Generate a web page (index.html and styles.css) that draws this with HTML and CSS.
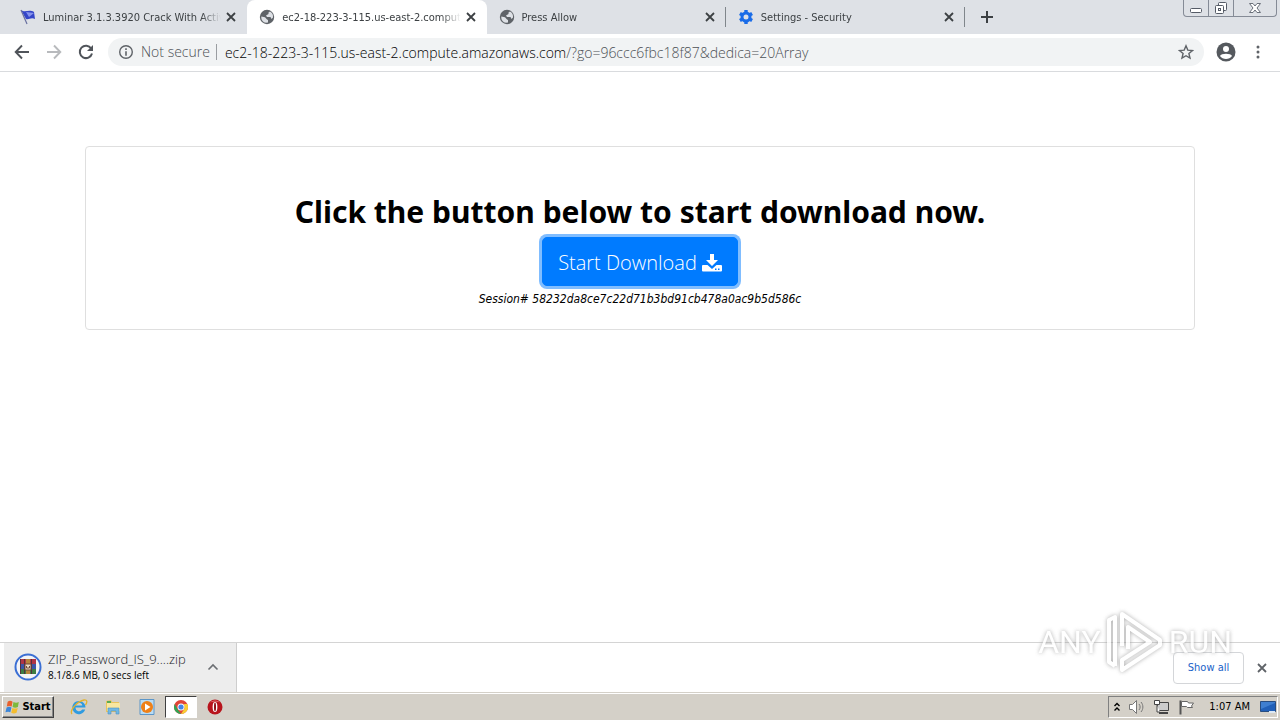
FILE: index.html
```
<!DOCTYPE html>
<html lang="en">
<head>
<meta charset="utf-8">
<title>Start Download</title>
<link rel="stylesheet" href="styles.css">
</head>
<body>
<svg class="defs" aria-hidden="true">
  <symbol id="close" viewBox="0 0 10 10"><path d="M1 1L9 9M9 1L1 9" fill="none" stroke="currentColor" stroke-width="1.8"/></symbol>
  <symbol id="globe" viewBox="0 0 16 16"><circle cx="8" cy="8" r="7.200" fill="#5f6368"/><path d="M7 6.500L9.500 5V3.500L11 2.600C13.500 4 14.200 6 14 8.500L12.500 10 11.500 8H8z" fill="#dee1e6"/><path d="M2.300 7.500L6 8.300 8 10.500 9 11v2.500L7 13.800C4 13.500 2 11 2.300 7.500z" fill="#dee1e6"/></symbol>
</svg>

<header class="tabstrip">
  <div class="tabs" role="tablist">
    <div class="tab" role="tab">
      <svg class="favicon" viewBox="0 0 16 16"><path d="M1 1c4 3 8-1 13 2l1 7c-4-2-6 1-9 0z" fill="#3546c8"/><path d="M6 3l8 1-5 4z" fill="#8793ec"/><path d="M1 1l6 14" stroke="#6870a0" stroke-width="1.200"/></svg>
      <span class="tab-title">Luminar 3.1.3.3920 Crack With Activ</span>
      <button class="tab-close" aria-label="Close tab"><svg><use href="#close"/></svg></button>
    </div>
    <div class="tab active" role="tab" aria-selected="true">
      <svg class="favicon"><use href="#globe"/></svg>
      <span class="tab-title">ec2-18-223-3-115.us-east-2.comput</span>
      <button class="tab-close" aria-label="Close tab"><svg><use href="#close"/></svg></button>
    </div>
    <div class="tab divided" role="tab">
      <svg class="favicon"><use href="#globe"/></svg>
      <span class="tab-title">Press Allow</span>
      <button class="tab-close" aria-label="Close tab"><svg><use href="#close"/></svg></button>
    </div>
    <div class="tab divided" role="tab">
      <svg class="favicon" viewBox="0 0 16 16"><circle cx="8" cy="8" r="4" fill="none" stroke="#1a6ce8" stroke-width="3"/><path d="M8 1v2.500M8 12.500V15M1.900 4.500l2.200 1.300M11.900 10.200l2.200 1.300M1.900 11.500l2.200-1.300M11.900 5.800l2.200-1.300" stroke="#1a6ce8" stroke-width="3.400"/></svg>
      <span class="tab-title">Settings - Security</span>
      <button class="tab-close" aria-label="Close tab"><svg><use href="#close"/></svg></button>
    </div>
  </div>
  <button class="new-tab" aria-label="New tab"><svg viewBox="0 0 12 12"><path d="M6 0v12M0 6h12" stroke="#3c4043" stroke-width="2"/></svg></button>
  <div class="window-controls">
    <button aria-label="Minimize"><svg viewBox="0 0 14 14"><rect x="1.500" y="7.500" width="11" height="4" rx="1" fill="#fff" stroke="#555b66"/></svg></button>
    <button aria-label="Restore"><svg viewBox="0 0 14 14"><rect x="4.500" y="1.500" width="8" height="8" rx="1" fill="#fff" stroke="#555b66"/><rect x="1.500" y="4.500" width="8" height="8" rx="1" fill="#fff" stroke="#555b66"/><rect x="4.500" y="7.500" width="2" height="2" fill="none" stroke="#555b66"/></svg></button>
    <button class="wide" aria-label="Close"><svg viewBox="0 0 14 14"><path d="M1.500 2.500h3.500l2 2.500 2-2.500h3.500L9 7l3.500 4.500H9L7 9l-2 2.500H1.500L5 7z" fill="#fff" stroke="#6a707a"/></svg></button>
  </div>
</header>

<nav class="toolbar">
  <button class="tool" aria-label="Back"><svg viewBox="0 0 16 16"><path d="M15 8H2M8 1.500L1.700 8 8 14.500" fill="none" stroke="#50545a" stroke-width="1.900"/></svg></button>
  <button class="tool" aria-label="Forward"><svg viewBox="0 0 16 16"><path d="M1 8h13M8 1.500L14.300 8 8 14.500" fill="none" stroke="#b8babd" stroke-width="1.900"/></svg></button>
  <button class="tool" aria-label="Reload"><svg viewBox="0 0 16 16"><path d="M13.200 4.500A6.200 6.200 0 1 0 14 9.500" fill="none" stroke="#50545a" stroke-width="2"/><path d="M15 1v6H9z" fill="#50545a"/></svg></button>
  <div class="omnibox">
    <svg class="info" viewBox="0 0 16 16"><circle cx="8" cy="8" r="6.300" fill="none" stroke="#5f6368" stroke-width="1.400"/><path d="M8 4.200v1.700M8 7.200v4.600" stroke="#5f6368" stroke-width="1.600"/></svg>
    <span class="security">Not secure</span>
    <span class="url"><span class="host">ec2-18-223-3-115.us-east-2.compute.amazonaws.com</span>/?go=96ccc6fbc18f87&amp;dedica=20Array</span>
    <button class="star" aria-label="Bookmark this page"><svg viewBox="0 0 16 16"><path d="M8 1.800l1.800 4.300 4.700.4-3.600 3 1.100 4.600L8 11.700l-4 2.400 1.100-4.600-3.600-3 4.700-.4z" fill="none" stroke="#5f6368" stroke-width="1.400"/></svg></button>
  </div>
  <button class="tool" aria-label="Profile"><svg class="avatar" viewBox="0 0 20 20"><circle cx="10" cy="10" r="9.500" fill="#55595e"/><circle cx="10" cy="7" r="3" fill="#fff"/><path d="M4 14c1-3 11-3 12 0-2.500 4-9.500 4-12 0z" fill="#fff"/></svg></button>
  <button class="tool menu" aria-label="Menu"><svg viewBox="0 0 4 16"><circle cx="2" cy="3" r="1.500"/><circle cx="2" cy="8" r="1.500"/><circle cx="2" cy="13" r="1.500"/></svg></button>
</nav>

<main class="page">
  <section class="card">
    <h1>Click the button below to start download now.</h1>
    <button class="download">Start Download <svg viewBox="0 0 20 18"><path d="M8 0h4v6h4l-6 6-6-6h4z" fill="#fff"/><path d="M1 11h4.500L10 15l4.500-4H19a1 1 0 0 1 1 1v4.500a1 1 0 0 1-1 1H1a1 1 0 0 1-1-1V12a1 1 0 0 1 1-1z" fill="#fff"/><path d="M13 14.500h1.500v1.500H13zM16 14.500h1.500v1.500H16z" fill="#007bff"/></svg></button>
    <p class="session">Session# 58232da8ce7c22d71b3bd91cb478a0ac9b5d586c</p>
  </section>
</main>

<div class="shelf">
  <div class="item">
    <svg class="archive" viewBox="0 0 28 28"><circle cx="14" cy="14" r="12.500" fill="#f4f4f6" stroke="#3b6fd4" stroke-width="2"/><path d="M6 6h16v5H6z" fill="#b03446"/><path d="M6 11h16v5H6z" fill="#3c56a8"/><path d="M6 16h16v5H6z" fill="#3d7c43"/><path d="M6 6h1v15H6zM10 6h1v15h-1zM17 6h1v15h-1z" fill="#55313d"/><path d="M12 6h4v15h-4z" fill="#b8843b"/><path d="M11 11h6v6h-6z" fill="#e9d9c0" stroke="#70493a"/><path d="M12.500 13v2h3v-2" fill="none" stroke="#70493a"/></svg>
    <div class="file">
      <div class="name">ZIP_Password_IS_9....zip</div>
      <div class="status">8.1/8.6 MB, 0 secs left</div>
    </div>
    <button class="chevron" aria-label="Download options"><svg viewBox="0 0 12 8"><path d="M1.500 6.500L6 2l4.500 4.500" fill="none" stroke="#6b6e72" stroke-width="1.600"/></svg></button>
  </div>
  <button class="show-all">Show all</button>
  <button class="shelf-close" aria-label="Close downloads bar"><svg><use href="#close"/></svg></button>
  <div class="watermark"><span>ANY</span><svg viewBox="0 0 58 64"><path d="M9 56l-6-4V10l6-3v49M16 36V4l38 26v5L16 60V50l28-18-22-15v22" fill="none" stroke="#fff" stroke-width="4" stroke-linejoin="round"/></svg><span>RUN</span></div>
</div>

<footer class="taskbar">
  <button class="start"><svg viewBox="0 0 18 16"><path d="M3 2c2-1.500 4-1 5.500 0L7.500 7.500c-2-1-3.500-1-5.500 0z" fill="#e8602c"/><path d="M9.500 2.500c2 1 4 1 6 0L14.500 8c-2 1-4 1-6 0z" fill="#7db93c"/><path d="M1.800 8.500c2-1 3.700-1 5.500 0L6 14c-1.500-1-3.500-1-5.500 0z" fill="#3c86d8"/><path d="M8.300 9c2 1 4 1 6 0L13 14.500c-2 1-4 1-6 0z" fill="#f4bd2e"/></svg>Start</button>
  <div class="launch">
    <button aria-label="Internet Explorer"><svg viewBox="0 0 18 18"><path d="M15.500 9.500H5.500a3.600 3.600 0 0 0 6.700 2h3A6.600 6.600 0 1 1 15.500 9.500zM5.600 7.500h6.700a3.400 3.400 0 0 0-6.700 0z" fill="#2f9be0"/><path d="M2 16C-1 12 8 3 14 2c4-.5 3 3 1.500 5" fill="none" stroke="#e3b32d" stroke-width="1.300"/></svg></button>
    <button aria-label="Explorer"><svg viewBox="0 0 18 18"><path d="M2 3l5-1 1 2h7v10H2z" fill="#e8c45c"/><path d="M3 5h13v8H3z" fill="#f8e7a0"/><path d="M3 3h4v2H3z" fill="#59aa55"/><path d="M4 10h11v6h-3v-3H7v3H4z" fill="#70b8e4" stroke="#4a91c4" stroke-width=".6"/></svg></button>
    <button aria-label="Media Player"><svg viewBox="0 0 18 18"><path d="M2 1.500h14v15H2z" fill="#b9dcf4" stroke="#5c96c8"/><circle cx="9" cy="9" r="6" fill="#ee8018"/><path d="M7 5.500l5.500 3.500L7 12.500z" fill="#fff"/></svg></button>
    <button class="pressed" aria-label="Chrome"><svg viewBox="0 0 18 18"><circle cx="9" cy="9" r="7" fill="#e04437"/><path d="M2.700 6L6 12l3 4A7 7 0 0 1 2.700 6z" fill="#2ea454"/><path d="M9 16l3.500-5.500L12 6h3.300A7 7 0 0 1 9 16z" fill="#f8cf33"/><circle cx="9" cy="9" r="3.500" fill="#fff"/><circle cx="9" cy="9" r="2.600" fill="#4284e8"/></svg></button>
    <button aria-label="Opera"><svg viewBox="0 0 18 18"><circle cx="9" cy="9" r="7.500" fill="#b8141c"/><path d="M4 4.500a7 7 0 0 1 10 0c-3-1.500-7-1.500-10 0z" fill="#e77b7b"/><ellipse cx="9" cy="9" rx="2.400" ry="5" fill="#fff"/><ellipse cx="9" cy="9" rx="1" ry="4.400" fill="#8c1016"/></svg></button>
  </div>
  <div class="tray">
    <svg class="more" viewBox="0 0 8 10"><path d="M1.500 4L4 1.500 6.500 4M1.500 8.500L4 6l2.500 2.500" fill="none" stroke="#000" stroke-width="1.400"/></svg>
    <svg viewBox="0 0 18 16"><path d="M1.500 5.500h3l4-4v13l-4-4h-3z" fill="#fff" stroke="#777"/><path d="M11 5c1.500 2 1.500 4 0 6M13 3c2.500 3 2.500 7 0 10" fill="none" stroke="#777"/></svg>
    <svg viewBox="0 0 18 16"><path d="M4.500 3.500h11v8h-11z" fill="#ccc" stroke="#444"/><path d="M6 14h9" stroke="#444" stroke-width="2"/><path d="M1.500 1.500h5v4h-5zM4 6v7h3" fill="#fff" stroke="#444"/></svg>
    <svg viewBox="0 0 18 16"><path d="M2.500 1.500v14" stroke="#555" stroke-width="2"/><path d="M3.500 2.500h6l1 1.500h5l-2 3 1 1.500h-5l-1-1h-5z" fill="#fff" stroke="#666"/></svg>
    <span class="clock">1:07 AM</span>
    <svg viewBox="0 0 18 16"><path d="M1.500 2.500h15v10h-15z" fill="#2160b8" stroke="#284d80"/><path d="M2 3h14v1L2 10z" fill="#3f7fd0"/><path d="M10 12h6v2h-6z" fill="#dce8f4"/></svg>
  </div>
</footer>
</body>
</html>
```
FILE: styles.css
```
* { box-sizing: border-box; }
body {
  margin: 0;
  min-height: 100vh;
  display: flex;
  flex-direction: column;
  background: #fff;
  color: #000;
  font-family: "Noto Sans", sans-serif;
}
button {
  display: flex;
  align-items: center;
  justify-content: center;
  padding: 0;
  border: 0;
  background: none;
  color: inherit;
  font: inherit;
}
svg { flex: none; }
.defs { display: none; }

.tabstrip { display: flex; height: 34px; padding-left: 8px; background: #dee1e6; }
.tabs { display: flex; flex: 0 1 957px; min-width: 0; }
.tab {
  display: flex;
  flex: 1 1 0;
  align-items: center;
  min-width: 0;
  padding: 0 10px 0 12px;
  color: #3c4043;
  font-family: "DejaVu Sans Condensed", "DejaVu Sans", sans-serif;
  font-size: 11px;
}
.tab.active { background: #fff; border-radius: 8px 8px 0 0; }
.tab.divided { background: linear-gradient(#80868b, #80868b) right center / 1px 20px no-repeat; }
.favicon { width: 16px; height: 16px; margin-right: 7px; }
.tab-title {
  flex: 1;
  overflow: hidden;
  white-space: nowrap;
  mask-image: linear-gradient(to right, #000 calc(100% - 20px), transparent);
}
.tab-close { width: 12px; height: 16px; margin-left: 4px; }
.tab-close svg, .shelf-close svg { width: 10px; height: 10px; }
.new-tab { width: 44px; }
.new-tab svg { width: 12px; height: 12px; }
.window-controls {
  display: flex;
  height: 17px;
  margin: 0 3px 0 auto;
  border: 1px solid #858b96;
  border-top: 0;
  border-radius: 0 0 4px 4px;
}
.window-controls button { width: 25px; border-right: 1px solid #858b96; }
.window-controls .wide { width: 42px; border: 0; }
.window-controls svg { width: 14px; height: 14px; }

.toolbar {
  display: flex;
  align-items: center;
  height: 38px;
  padding: 0 6px 1px;
  border-bottom: 1px solid #d9dbde;
}
.tool { width: 32px; height: 28px; }
.tool svg { width: 16px; height: 16px; }
.tool .avatar { width: 20px; height: 20px; }
.omnibox {
  display: flex;
  flex: 1;
  align-items: center;
  min-width: 0;
  height: 28px;
  margin: 0 6px;
  padding: 0 10px;
  border-radius: 14px;
  background: #f1f3f4;
  color: #4c5055;
  font-family: "Open Sans", sans-serif;
  font-size: 14px;
  font-weight: 300;
  white-space: nowrap;
}
.info { width: 16px; height: 16px; margin-right: 7px; }
.security { padding-right: 6px; border-right: 1px solid #9a9da1; line-height: 16px; }
.url { flex: 1; padding-left: 8px; overflow: hidden; }
.host { color: #000; }
.star svg { width: 16px; height: 16px; }
.menu svg { width: 4px; height: 16px; fill: #5f6368; }

.page { flex: 1; padding: 74px 16px 16px; }
.card {
  display: flex;
  flex-direction: column;
  align-items: center;
  max-width: 1110px;
  margin: 0 auto;
  padding: 46px 20px 21px;
  border: 1px solid #dfdfdf;
  border-radius: 4px;
  text-align: center;
}
h1 { margin: 0 0 6px; font-size: 30px; line-height: 38px; }
.download {
  gap: 5px;
  padding: 9px 15px 6px;
  border: 1px solid #007bff;
  border-radius: 5px;
  background: #007bff;
  box-shadow: 0 0 0 3px #80bdff;
  color: #fff;
  font-family: "Open Sans", sans-serif;
  font-size: 20px;
  font-weight: 300;
  line-height: 32px;
}
.download svg { width: 20px; height: 18px; }
.session {
  margin: 4px 0 0;
  font-family: "DejaVu Sans Condensed", "DejaVu Sans", sans-serif;
  font-size: 12px;
  font-style: italic;
  line-height: 18px;
}

.shelf {
  position: relative;
  display: flex;
  align-items: center;
  height: 50px;
  padding: 0 12px 0 4px;
  border-top: 1px solid #d4d4d4;
  font-family: "DejaVu Sans Condensed", "DejaVu Sans", sans-serif;
}
.item {
  display: flex;
  align-items: center;
  align-self: stretch;
  width: 233px;
  padding: 0 15px 2px 10px;
  border-right: 1px solid #cecece;
  background: #ededed;
}
.archive { width: 28px; height: 28px; }
.file { flex: 1; margin-left: 6px; white-space: nowrap; font-family: "Open Sans", sans-serif; }
.name { color: #202124; font-size: 13px; font-weight: 300; line-height: 16px; }
.status { font-size: 10px; line-height: 16px; }
.chevron { width: 16px; height: 16px; }
.chevron svg { width: 12px; height: 8px; }
.show-all {
  width: 71px;
  height: 32px;
  margin-left: auto;
  border: 1px solid #d4d6d9;
  border-radius: 4px;
  color: #1a62c8;
  font-size: 11px;
}
.shelf-close { width: 12px; height: 16px; margin-left: 12px; color: #5f6368; }
.watermark {
  position: absolute;
  right: 48px;
  bottom: 18px;
  display: flex;
  align-items: center;
  gap: 5px;
  color: #fff;
  filter: drop-shadow(0 0 2px #999);
  font-family: Roboto, "Liberation Sans", sans-serif;
  font-size: 32px;
  line-height: 64px;
  opacity: .8;
  pointer-events: none;
}
.watermark svg { width: 58px; height: 64px; }

.taskbar {
  display: flex;
  align-items: center;
  height: 28px;
  padding: 0 2px;
  border-top: 1px solid #d4d0c8;
  background: #d4d0c8;
  box-shadow: inset 0 1px #fff;
  font-family: "DejaVu Sans Condensed", "DejaVu Sans", sans-serif;
  font-size: 11px;
}
.start {
  gap: 1px;
  width: 52px;
  height: 22px;
  border: 1px solid;
  border-color: #fff #404040 #404040 #fff;
  box-shadow: inset -1px -1px #888;
  font-weight: bold;
}
.start svg { width: 16px; height: 16px; }
.launch { display: flex; gap: 2px; margin-left: 9px; }
.launch button { width: 32px; height: 22px; border: 1px solid transparent; }
.launch svg { width: 18px; height: 18px; }
.launch .pressed { border-color: #404040 #fff #fff #404040; background: #fff; }
.tray {
  display: flex;
  align-items: center;
  gap: 7px;
  height: 22px;
  margin-left: auto;
  padding: 0 0 0 4px;
  border: 1px solid;
  border-color: #808080 #fff #fff #808080;
}
.tray svg { width: 18px; height: 16px; }
.tray .more { width: 8px; height: 10px; }
.clock { margin: 0 2px 0 6px; white-space: nowrap; }
```
